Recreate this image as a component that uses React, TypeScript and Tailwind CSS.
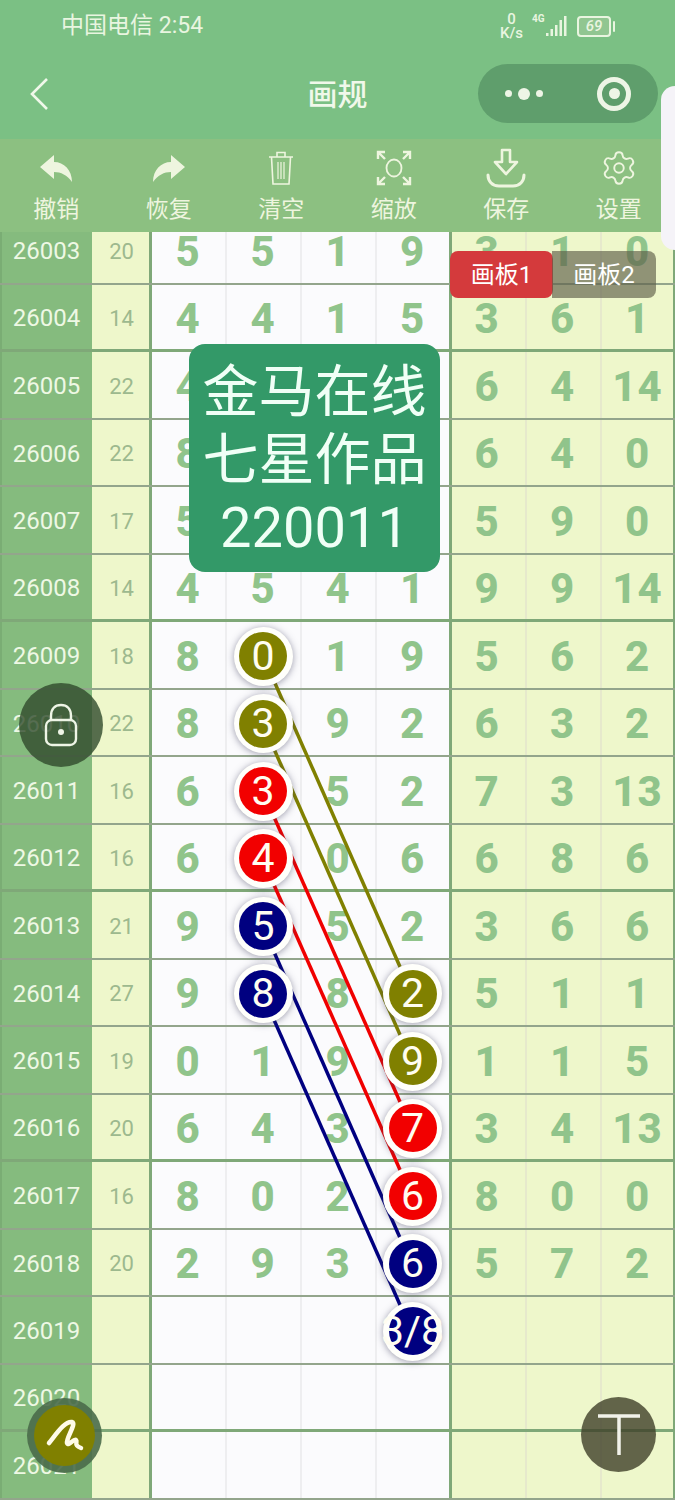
import React from "react";
import { Settings } from "lucide-react";

type Ball = { value: string; color: string };
type Cell = string | Ball;

interface RowData {
  id: string;
  sum: string;
  cells: Cell[];
}

const olive = "bg-[#808000]";
const red = "bg-[#f20000]";
const navy = "bg-[#000080]";

const ball = (value: string, color: string): Ball => ({ value, color });

const rows: RowData[] = [
  { id: "26003", sum: "20", cells: ["5", "5", "1", "9", "3", "1", "0"] },
  { id: "26004", sum: "14", cells: ["4", "4", "1", "5", "3", "6", "1"] },
  { id: "26005", sum: "22", cells: ["4", "", "", "", "6", "4", "14"] },
  { id: "26006", sum: "22", cells: ["8", "", "", "", "6", "4", "0"] },
  { id: "26007", sum: "17", cells: ["5", "", "", "", "5", "9", "0"] },
  { id: "26008", sum: "14", cells: ["4", "5", "4", "1", "9", "9", "14"] },
  { id: "26009", sum: "18", cells: ["8", ball("0", olive), "1", "9", "5", "6", "2"] },
  { id: "26010", sum: "22", cells: ["8", ball("3", olive), "9", "2", "6", "3", "2"] },
  { id: "26011", sum: "16", cells: ["6", ball("3", red), "5", "2", "7", "3", "13"] },
  { id: "26012", sum: "16", cells: ["6", ball("4", red), "0", "6", "6", "8", "6"] },
  { id: "26013", sum: "21", cells: ["9", ball("5", navy), "5", "2", "3", "6", "6"] },
  { id: "26014", sum: "27", cells: ["9", ball("8", navy), "8", ball("2", olive), "5", "1", "1"] },
  { id: "26015", sum: "19", cells: ["0", "1", "9", ball("9", olive), "1", "1", "5"] },
  { id: "26016", sum: "20", cells: ["6", "4", "3", ball("7", red), "3", "4", "13"] },
  { id: "26017", sum: "16", cells: ["8", "0", "2", ball("6", red), "8", "0", "0"] },
  { id: "26018", sum: "20", cells: ["2", "9", "3", ball("6", navy), "5", "7", "2"] },
  { id: "26019", sum: "", cells: ["", "", "", ball("3/8", navy), "", "", ""] },
  { id: "26020", sum: "", cells: ["", "", "", "", "", "", ""] },
  { id: "26021", sum: "", cells: ["", "", "", "", "", "", ""] },
];

const links = [
  { x1: 263, y1: 656, x2: 412, y2: 994, stroke: "#808000" },
  { x1: 263, y1: 724, x2: 412, y2: 1062, stroke: "#808000" },
  { x1: 263, y1: 792, x2: 412, y2: 1129, stroke: "#f00000" },
  { x1: 263, y1: 860, x2: 412, y2: 1197, stroke: "#f00000" },
  { x1: 263, y1: 927, x2: 412, y2: 1265, stroke: "#000080" },
  { x1: 263, y1: 995, x2: 412, y2: 1332, stroke: "#000080" },
];

const UndoIcon = ({ flip }: { flip?: boolean }) => (
  <svg width="32" height="27" viewBox="0 0 32 27" className={flip ? "-scale-x-100" : ""}>
    <path
      d="M0 12 L14 0 V7 C24 7 32 15 32 27 C27 20 21 17 14 17 V24 Z"
      fill="currentColor"
    />
  </svg>
);

const TrashIcon = () => (
  <svg width="26" height="36" viewBox="0 0 26 36" fill="none" stroke="currentColor" strokeWidth="1.6">
    <path d="M1 7 H25 M9 7 V2.5 H17 V7" />
    <path d="M3.5 7 L5 34 H21 L22.5 7" />
    <path d="M10 12 V29 M13 12 V29 M16 12 V29" strokeWidth="1.2" />
  </svg>
);

const ScanIcon = () => (
  <svg width="36" height="36" viewBox="0 0 36 36" fill="none" stroke="currentColor" strokeWidth="2.4">
    <ellipse cx="18" cy="18" rx="7.5" ry="8.5" strokeWidth="1.8" />
    <path d="M2 9 V2 H9 M2 2 L9 9" />
    <path d="M27 2 H34 V9 M34 2 L27 9" />
    <path d="M2 27 V34 H9 M2 34 L9 27" />
    <path d="M27 34 H34 V27 M34 34 L27 27" />
  </svg>
);

const SaveIcon = () => (
  <svg width="40" height="40" viewBox="0 0 40 40" fill="none" stroke="currentColor" strokeWidth="2.6" strokeLinejoin="round">
    <path d="M16 2 H24 V14 H31 L20 26 L9 14 H16 Z" />
    <path d="M2 27 C2 33 6 38 13 38 H27 C34 38 38 33 38 27" strokeLinecap="round" strokeWidth="3" />
  </svg>
);

const StatusIcons = () => (
  <div className="flex items-center gap-[9px] text-[#e9f5e0]">
    <div className="flex flex-col items-center text-[15px] leading-[14px] font-medium">
      <span>0</span>
      <span>K/s</span>
    </div>
    <div className="relative w-[36px] h-[24px]">
      <span className="absolute left-0 top-[-1px] text-[10px] leading-[12px] font-bold">4G</span>
      <svg width="36" height="24" viewBox="0 0 36 24" fill="currentColor">
        <rect x="14" y="19" width="2.5" height="3" />
        <rect x="18.5" y="15" width="2.5" height="7" />
        <rect x="23" y="11" width="2.5" height="11" />
        <rect x="27.5" y="6" width="2.5" height="16" />
        <rect x="32" y="2" width="2.5" height="20" />
      </svg>
    </div>
    <div className="flex items-center gap-[2px]">
      <div className="w-[34px] h-[21px] border-2 border-[#e9f5e0] rounded-[4px] flex items-center justify-center text-[15px] leading-none font-medium bg-[#a0c99a]/60 italic">
        69
      </div>
      <div className="w-[2px] h-[11px] bg-[#e9f5e0] rounded-sm" />
    </div>
  </div>
);

const BallMark = ({ value, color }: Ball) => (
  <div className="relative z-20 w-[59px] h-[59px] rounded-full bg-[#fffffb] shadow-[0_1px_7px_rgba(60,60,90,0.5)] flex items-center justify-center">
    <div className={`w-[48px] h-[48px] rounded-full flex items-center justify-center text-[#fffdf0] text-[41px] font-normal tracking-normal whitespace-nowrap ${color}`}>
      {value}
    </div>
  </div>
);

const Row = ({ row, index }: { row: RowData; index: number }) => {
  const thick = index % 4 === 1;
  return (
    <div className={`flex h-[67.5px] box-border ${thick ? "border-b-[3px] border-[#7fa878]" : "border-b-2 border-[#93a58c]"}`}>
      <div className="w-[92px] flex items-center justify-center bg-[#85bb7e] border-l-2 border-[#7aad74] text-[24px] text-[#eef8e4] pr-[1px] pt-[3px]">
        {row.id}
      </div>
      <div className="w-[57px] flex items-center justify-center bg-[#eef7cb] text-[22px] text-[#9db98e] pl-[2px] pt-[3px]">
        {row.sum}
      </div>
      {row.cells.map((cell, i) => {
        const white = i < 4;
        return (
          <div
            key={i}
            className={`flex items-center justify-center text-[42px] font-extrabold tracking-[1px] pt-[3px] text-[#90c48b] ${
              i === 0 || i === 4 ? "w-[76px]" : i === 3 ? "w-[74px]" : "w-[75px]"
            } ${white ? "bg-[#fbfbfd] pr-[1px]" : "bg-[#eef7cb]"} ${
              i === 0 || i === 4
                ? "border-l-[3px] border-l-[#7fa878]"
                : white
                  ? "border-l-2 border-l-[#eeeef0]"
                  : "border-l-2 border-l-[#e6e9cc]"
            } ${i === 4 ? "pr-[3px]" : i === 5 ? "pr-[2px]" : ""} ${i === 6 ? "border-r-2 border-r-[#7fa878]" : ""}`}
          >
            {typeof cell === "string" ? cell : <BallMark {...cell} />}
          </div>
        );
      })}
    </div>
  );
};

const tools = [
  { label: "撤销", icon: <UndoIcon /> },
  { label: "恢复", icon: <UndoIcon flip /> },
  { label: "清空", icon: <TrashIcon /> },
  { label: "缩放", icon: <ScanIcon /> },
  { label: "保存", icon: <SaveIcon /> },
  { label: "设置", icon: <Settings size={38} strokeWidth={1.2} /> },
];

export default function App() {
  return (
    <div className="relative w-[675px] h-[1500px] overflow-hidden flex flex-col font-['Roboto','Noto_Sans_CJK_SC',sans-serif]">
      {/* status bar + nav */}
      <div className="bg-[#7bc084] h-[139px] shrink-0 flex flex-col">
        <div className="h-[50px] flex items-center justify-between pl-[61px] pr-[60px] pt-[2px]">
          <span className="text-[23px] text-[#e9f5e0]">中国电信 2:54</span>
          <StatusIcons />
        </div>
        <div className="flex-1 flex items-center justify-between pl-[29px] pr-[17px] pb-[1px] relative">
          <svg width="22" height="34" viewBox="0 0 22 34" fill="none" stroke="#f0f8ea" strokeWidth="2.6">
            <path d="M18 2 L3 17 L18 32" />
          </svg>
          <span className="absolute left-0 right-0 text-center text-[30px] font-medium text-[#f0f8ea]">画规</span>
          <div className="w-[180px] h-[59px] mb-[1px] rounded-full bg-[#5f9e6c] flex items-center pl-[27px] pr-[27px] justify-between">
            <div className="flex items-center gap-[6px]">
              <div className="w-[7px] h-[7px] rounded-full bg-[#eef5e6]" />
              <div className="w-[12px] h-[12px] rounded-full bg-[#eef5e6]" />
              <div className="w-[7px] h-[7px] rounded-full bg-[#eef5e6]" />
            </div>
            <div className="w-[34px] h-[34px] rounded-full border-[5px] border-[#eef5e6] flex items-center justify-center">
              <div className="w-[11px] h-[11px] rounded-full bg-[#eef5e6]" />
            </div>
          </div>
        </div>
      </div>

      {/* toolbar */}
      <div className="h-[93px] shrink-0 bg-[#8cc081] grid grid-cols-6 text-[#eef5df] pt-[9px]">
        {tools.map((tool) => (
          <div key={tool.label} className="flex flex-col items-center">
            <div className="h-[40px] flex items-center justify-center">{tool.icon}</div>
            <span className="mt-[7px] text-[23px] leading-[30px]">{tool.label}</span>
          </div>
        ))}
      </div>

      {/* table, first row is scrolled under the toolbar */}
      <div className="flex-1 overflow-hidden">
        <div className="-mt-[15px]">
          {rows.map((row, index) => (
            <Row key={row.id} row={row} index={index} />
          ))}
        </div>
      </div>

      {/* connecting lines */}
      <svg className="absolute inset-0 z-10 pointer-events-none" width="675" height="1500" viewBox="0 0 675 1500">
        {links.map((l, i) => (
          <line key={i} x1={l.x1} y1={l.y1} x2={l.x2} y2={l.y2} stroke={l.stroke} strokeWidth="3.5" />
        ))}
      </svg>

      {/* board tabs */}
      <div className="absolute z-30 left-[450px] top-[251px] flex h-[47px] text-[24px] text-white leading-none">
        <div className="w-[103px] rounded-lg bg-[#d43a3c] flex items-center justify-center">画板1</div>
        <div className="w-[104px] -ml-[1px] rounded-r-lg bg-[#5e5e48]/65 flex items-center justify-center">画板2</div>
      </div>

      {/* watermark card */}
      <div className="absolute z-30 left-[189px] top-[344px] w-[251px] h-[228px] rounded-2xl bg-[#339968] flex flex-col items-center justify-center pt-[3px] text-[#f0fff6] text-[56px] leading-[68px]">
        <span>金马在线</span>
        <span>七星作品</span>
        <span>220011</span>
      </div>

      {/* lock button */}
      <div className="absolute z-30 left-[19px] top-[683px] w-[84px] h-[84px] rounded-full bg-[#2f4a2c]/80 flex items-center justify-center">
        <svg width="34" height="44" viewBox="0 0 34 44" fill="none" stroke="#eef5e6" strokeWidth="2.4">
          <rect x="2" y="17" width="30" height="25" rx="6" />
          <path d="M7 17 V13 C7 6 11 2 17 2 C23 2 27 6 27 13 V17" />
          <circle cx="17" cy="29" r="3" fill="#eef5e6" stroke="none" />
        </svg>
      </div>

      {/* pen button */}
      <div className="absolute z-30 left-[27px] top-[1398px] w-[75px] h-[75px] rounded-full bg-[#4a6b4a]/90 flex items-center justify-center">
        <div className="w-[61px] h-[61px] rounded-full bg-[#808000] flex items-center justify-center">
          <svg width="40" height="40" viewBox="0 0 40 40" fill="none" stroke="#fffbe8" strokeWidth="4.5" strokeLinecap="round" strokeLinejoin="round">
            <path d="M4 27 C12 17 20 5 27 6 C32 7 21 22 22 27 C23 31 29 22 31 24 C33 26 28 29 36 32" />
          </svg>
        </div>
      </div>

      {/* text button */}
      <div className="absolute z-30 left-[581px] top-[1397px] w-[75px] h-[75px] rounded-full bg-[#3e3e28]/80 flex items-center justify-center">
        <svg width="44" height="44" viewBox="0 0 44 44" fill="none" stroke="#f2f2ea" strokeWidth="3.5">
          <path d="M1 3 H43 M22 3 V42" />
        </svg>
      </div>

      {/* drawer handle */}
      <div className="absolute z-30 left-[661px] top-[86px] w-[14px] h-[164px] rounded-l-[20px] bg-[#f5f3f8]" />
    </div>
  );
}
